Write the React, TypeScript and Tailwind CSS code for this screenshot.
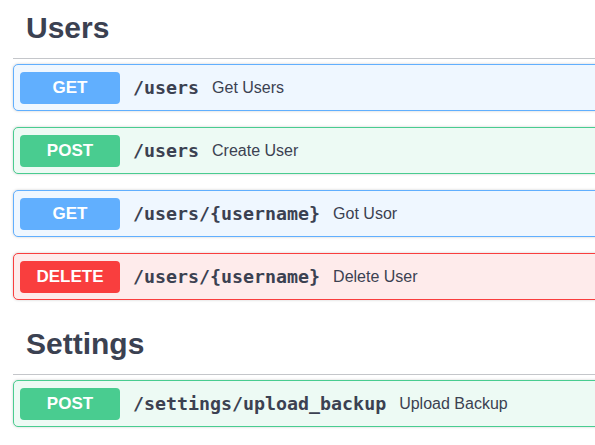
const sections = [
  {
    title: 'Users',
    ops: [
      { method: 'GET', path: '/users', summary: 'Get Users' },
      { method: 'POST', path: '/users', summary: 'Create User' },
      { method: 'GET', path: '/users/{username}', summary: 'Got Usor' },
      { method: 'DELETE', path: '/users/{username}', summary: 'Delete User' },
    ],
  },
  {
    title: 'Settings',
    ops: [{ method: 'POST', path: '/settings/upload_backup', summary: 'Upload Backup' }],
  },
]

const styles: Record<string, { block: string; badge: string }> = {
  GET: { block: 'border-[#61affe] bg-[#eff7ff]', badge: 'bg-[#61affe]' },
  POST: { block: 'border-[#49cc90] bg-[#edfaf4]', badge: 'bg-[#49cc90]' },
  DELETE: { block: 'border-[#f93e3e] bg-[#feebeb]', badge: 'bg-[#f93e3e]' },
}

function Operation({ method, path, summary }: { method: string; path: string; summary: string }) {
  const s = styles[method]
  return (
    <div
      className={`mb-[16px] flex h-[47px] items-center rounded-[5px] border px-[6px] shadow-[0_0_3px_rgba(0,0,0,0.19)] ${s.block}`}
    >
      <span
        className={`flex h-8 w-[100px] shrink-0 items-center justify-center rounded-[4px] text-[17px] font-bold text-white ${s.badge}`}
        style={{ fontFamily: '"Liberation Sans", Arial, sans-serif' }}
      >
        {method}
      </span>
      <span
        className="ml-[13px] text-[18.3px] font-bold text-[#3b4151]"
        style={{ fontFamily: '"DejaVu Sans Mono", monospace' }}
      >
        {path}
      </span>
      <span className="ml-[13px] text-[16px] text-[#3b4151]">{summary}</span>
    </div>
  )
}

export default function App() {
  return (
    <div
      className="h-[445px] w-[595px] overflow-hidden bg-white"
      style={{ fontFamily: '"Liberation Sans", Arial, sans-serif' }}
    >
      <div className="w-[680px] pl-[13px]">
        {sections.map((section) => (
          <div key={section.title}>
            <h3 className="mb-[5px] border-b border-[rgba(59,65,81,0.3)] pb-[12px] pl-[13px] pt-[10px] text-[30px] font-bold leading-[36px] text-[#3b4151]">
              {section.title}
            </h3>
            {section.ops.map((op, i) => (
              <Operation key={i} {...op} />
            ))}
          </div>
        ))}
      </div>
    </div>
  )
}
